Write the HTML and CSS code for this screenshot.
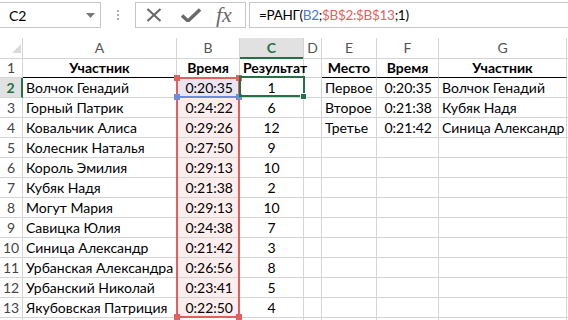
FILE: index.html
```html
<!DOCTYPE html>
<html lang="ru">
<head>
    <meta charset="UTF-8">
    <title>РАНГ</title>
    <link rel="stylesheet" href="styles.css">
</head>
<body>

<div class="formula-bar">
    <div class="name-box">
        <span>C2</span>
        <svg class="caret" width="9" height="5" viewBox="0 0 9 5"><path d="M0 0h9L4.5 5z" fill="#777"/></svg>
    </div>
    <div class="grip"><i></i><i></i><i></i></div>
    <div class="buttons">
        <svg width="16" height="14" viewBox="0 0 16 14"><path d="M1.5 1L14.5 13M14.5 1L1.5 13" stroke="#6a6a6a" stroke-width="2.2" fill="none"/></svg>
        <svg width="20" height="14" viewBox="0 0 20 14"><path d="M1 7.5l6 5.5L19 1.5" stroke="#6a6a6a" stroke-width="3.4" fill="none"/></svg>
        <span class="fx">fx</span>
    </div>
    <div class="formula">=РАНГ(<span class="ref-blue">B2</span>;<span class="ref-red">$B$2:$B$13</span>;1)</div>
</div>

<div class="sheet">
    <div class="row head">
        <div class="cell corner"><span class="tri"></span></div>
        <div class="cell">A</div>
        <div class="cell">B</div>
        <div class="cell sel-col">C</div>
        <div class="cell">D</div>
        <div class="cell">E</div>
        <div class="cell">F</div>
        <div class="cell">G</div>
        <div class="cell"></div>
    </div>
    <div class="row titles">
        <div class="cell num">1</div>
        <div class="cell line">Участник</div>
        <div class="cell line">Время</div>
        <div class="cell line">Результат</div>
        <div class="cell"></div>
        <div class="cell line">Место</div>
        <div class="cell line">Время</div>
        <div class="cell line">Участник</div>
        <div class="cell"></div>
    </div>
    <div class="row">
        <div class="cell num sel-row">2</div>
        <div class="cell">Волчок Генадий</div>
        <div class="cell time ref-b2">0:20:35</div>
        <div class="cell rank">1</div>
        <div class="cell"></div>
        <div class="cell">Первое</div>
        <div class="cell time">0:20:35</div>
        <div class="cell">Волчок Генадий</div>
        <div class="cell"></div>
    </div>
    <div class="row">
        <div class="cell num">3</div>
        <div class="cell">Горный Патрик</div>
        <div class="cell time ref">0:24:22</div>
        <div class="cell rank">6</div>
        <div class="cell"></div>
        <div class="cell">Второе</div>
        <div class="cell time">0:21:38</div>
        <div class="cell">Кубяк Надя</div>
        <div class="cell"></div>
    </div>
    <div class="row">
        <div class="cell num">4</div>
        <div class="cell">Ковальчик Алиса</div>
        <div class="cell time ref">0:29:26</div>
        <div class="cell rank">12</div>
        <div class="cell"></div>
        <div class="cell">Третье</div>
        <div class="cell time">0:21:42</div>
        <div class="cell">Синица Александр</div>
        <div class="cell"></div>
    </div>
    <div class="row">
        <div class="cell num">5</div>
        <div class="cell">Колесник Наталья</div>
        <div class="cell time ref">0:27:50</div>
        <div class="cell rank">9</div>
        <div class="cell"></div><div class="cell"></div><div class="cell"></div><div class="cell"></div><div class="cell"></div>
    </div>
    <div class="row">
        <div class="cell num">6</div>
        <div class="cell">Король Эмилия</div>
        <div class="cell time ref">0:29:13</div>
        <div class="cell rank">10</div>
        <div class="cell"></div><div class="cell"></div><div class="cell"></div><div class="cell"></div><div class="cell"></div>
    </div>
    <div class="row">
        <div class="cell num">7</div>
        <div class="cell">Кубяк Надя</div>
        <div class="cell time ref">0:21:38</div>
        <div class="cell rank">2</div>
        <div class="cell"></div><div class="cell"></div><div class="cell"></div><div class="cell"></div><div class="cell"></div>
    </div>
    <div class="row">
        <div class="cell num">8</div>
        <div class="cell">Могут Мария</div>
        <div class="cell time ref">0:29:13</div>
        <div class="cell rank">10</div>
        <div class="cell"></div><div class="cell"></div><div class="cell"></div><div class="cell"></div><div class="cell"></div>
    </div>
    <div class="row">
        <div class="cell num">9</div>
        <div class="cell">Савицка Юлия</div>
        <div class="cell time ref">0:24:38</div>
        <div class="cell rank">7</div>
        <div class="cell"></div><div class="cell"></div><div class="cell"></div><div class="cell"></div><div class="cell"></div>
    </div>
    <div class="row">
        <div class="cell num">10</div>
        <div class="cell">Синица Александр</div>
        <div class="cell time ref">0:21:42</div>
        <div class="cell rank">3</div>
        <div class="cell"></div><div class="cell"></div><div class="cell"></div><div class="cell"></div><div class="cell"></div>
    </div>
    <div class="row">
        <div class="cell num">11</div>
        <div class="cell">Урбанская Александра</div>
        <div class="cell time ref">0:26:56</div>
        <div class="cell rank">8</div>
        <div class="cell"></div><div class="cell"></div><div class="cell"></div><div class="cell"></div><div class="cell"></div>
    </div>
    <div class="row">
        <div class="cell num">12</div>
        <div class="cell">Урбанский Николай</div>
        <div class="cell time ref">0:23:41</div>
        <div class="cell rank">5</div>
        <div class="cell"></div><div class="cell"></div><div class="cell"></div><div class="cell"></div><div class="cell"></div>
    </div>
    <div class="row">
        <div class="cell num">13</div>
        <div class="cell">Якубовская Патриция</div>
        <div class="cell time ref">0:22:50</div>
        <div class="cell rank">4</div>
        <div class="cell"></div><div class="cell"></div><div class="cell"></div><div class="cell"></div><div class="cell"></div>
    </div>
    <div class="row tail">
        <div class="cell num"></div>
        <div class="cell"></div><div class="cell"></div><div class="cell"></div><div class="cell"></div><div class="cell"></div><div class="cell"></div><div class="cell"></div><div class="cell"></div>
    </div>

    <!-- выделения поверх сетки -->
    <div class="range-red"></div>
    <div class="range-blue"></div>
    <span class="knob red k1"></span>
    <span class="knob red k2"></span>
    <span class="knob red k3"></span>
    <span class="knob red k4"></span>
    <span class="knob blue k5"></span>
    <span class="knob blue k6"></span>
    <div class="active"></div>
    <span class="fill-handle"></span>
</div>

</body>
</html>
```

FILE: styles.css
```css
body {
    margin: 0;
    font-family: Lato, "Liberation Sans", sans-serif;
    font-size: 14px;
    color: #000;
    background-color: #fff;
    overflow: hidden;
}
.formula-bar {
    height: 38px;
    box-sizing: border-box;
    padding-top: 2px;
    display: flex;
    align-items: flex-start;
}
.name-box {
    width: 101px;
    height: 26px;
    box-sizing: border-box;
    border: 1px solid #c6c6c6;
    border-left: none;
    display: flex;
    align-items: center;
    justify-content: space-between;
    padding: 0 5px 0 9px;
}
.grip {
    width: 34px;
    height: 26px;
    display: flex;
    flex-direction: column;
    align-items: center;
    justify-content: center;
    gap: 2px;
}
.grip i {
    width: 2px;
    height: 2px;
    background-color: #b0b0b0;
}
.buttons {
    width: 111px;
    height: 26px;
    box-sizing: border-box;
    border: 1px solid #c6c6c6;
    display: flex;
    align-items: center;
    padding-left: 10px;
    gap: 19px;
}
.fx {
    font-family: "Liberation Serif", serif;
    font-style: italic;
    font-size: 22px;
    color: #6a6a6a;
    line-height: 20px;
    margin-left: -4px;
}
.formula {
    flex: 1;
    height: 26px;
    box-sizing: border-box;
    margin-left: 3px;
    border: 1px solid #c6c6c6;
    border-right: none;
    padding-left: 9px;
    line-height: 24px;
    font-size: 13.5px;
    letter-spacing: -0.3px;
    white-space: nowrap;
}
.ref-blue {
    color: #4f79d6;
}
.ref-red {
    color: #e4605e;
}
.sheet {
    position: relative;
}
.row {
    display: grid;
    grid-template-columns: 23px 154px 63px 64px 18px 55px 62px 128px 1fr;
    height: 20px;
}
.cell {
    box-sizing: border-box;
    border-right: 1px solid #d4d4d4;
    border-bottom: 1px solid #d4d4d4;
    line-height: 19px;
    padding: 0 3px;
    white-space: nowrap;
}
.head .cell {
    text-align: center;
    color: #555;
}
.corner {
    position: relative;
}
.tri {
    position: absolute;
    right: 1px;
    bottom: 5px;
    width: 0;
    height: 0;
    border-left: 9px solid transparent;
    border-bottom: 9px solid #dadada;
}
.sel-col {
    background-color: #e1e1e1;
    color: #217346 !important;
    font-weight: bold;
    border-bottom: 2px solid #217346 !important;
}
.num {
    text-align: center;
    color: #444;
    padding: 0;
}
.sel-row {
    background-color: #e1e1e1;
    color: #217346;
    font-weight: bold;
    border-right: 2px solid #217346;
}
.titles .cell {
    font-weight: bold;
    text-align: center;
}
.titles .num {
    font-weight: normal;
}
.titles .line {
    border-bottom: 1px solid #000;
}
.time {
    text-align: right;
    padding-right: 6px;
}
.rank {
    text-align: center;
}
.ref {
    background-color: #fdeded;
}
.ref-b2 {
    background-color: #ebe5f1;
}
.range-red {
    position: absolute;
    left: 176px;
    top: 39px;
    width: 64px;
    height: 241px;
    box-sizing: border-box;
    border: 2px solid #e4605e;
}
.range-blue {
    position: absolute;
    left: 176px;
    top: 58px;
    width: 64px;
    height: 2px;
    background-color: #6a8de0;
}
.knob {
    position: absolute;
    width: 6px;
    height: 6px;
}
.knob.red {
    background-color: #e4605e;
}
.knob.blue {
    background-color: #6a8de0;
}
.k1 { left: 174px; top: 37px; }
.k2 { left: 236px; top: 37px; }
.k3 { left: 174px; top: 276px; }
.k4 { left: 236px; top: 276px; }
.k5 { left: 174px; top: 56px; }
.k6 { left: 236px; top: 56px; }
.active {
    position: absolute;
    left: 239px;
    top: 38px;
    width: 66px;
    height: 21px;
    box-sizing: border-box;
    border: 2px solid #217346;
}
.fill-handle {
    position: absolute;
    left: 300px;
    top: 55px;
    width: 5px;
    height: 5px;
    background-color: #217346;
    border: 1px solid #fff;
}
```
